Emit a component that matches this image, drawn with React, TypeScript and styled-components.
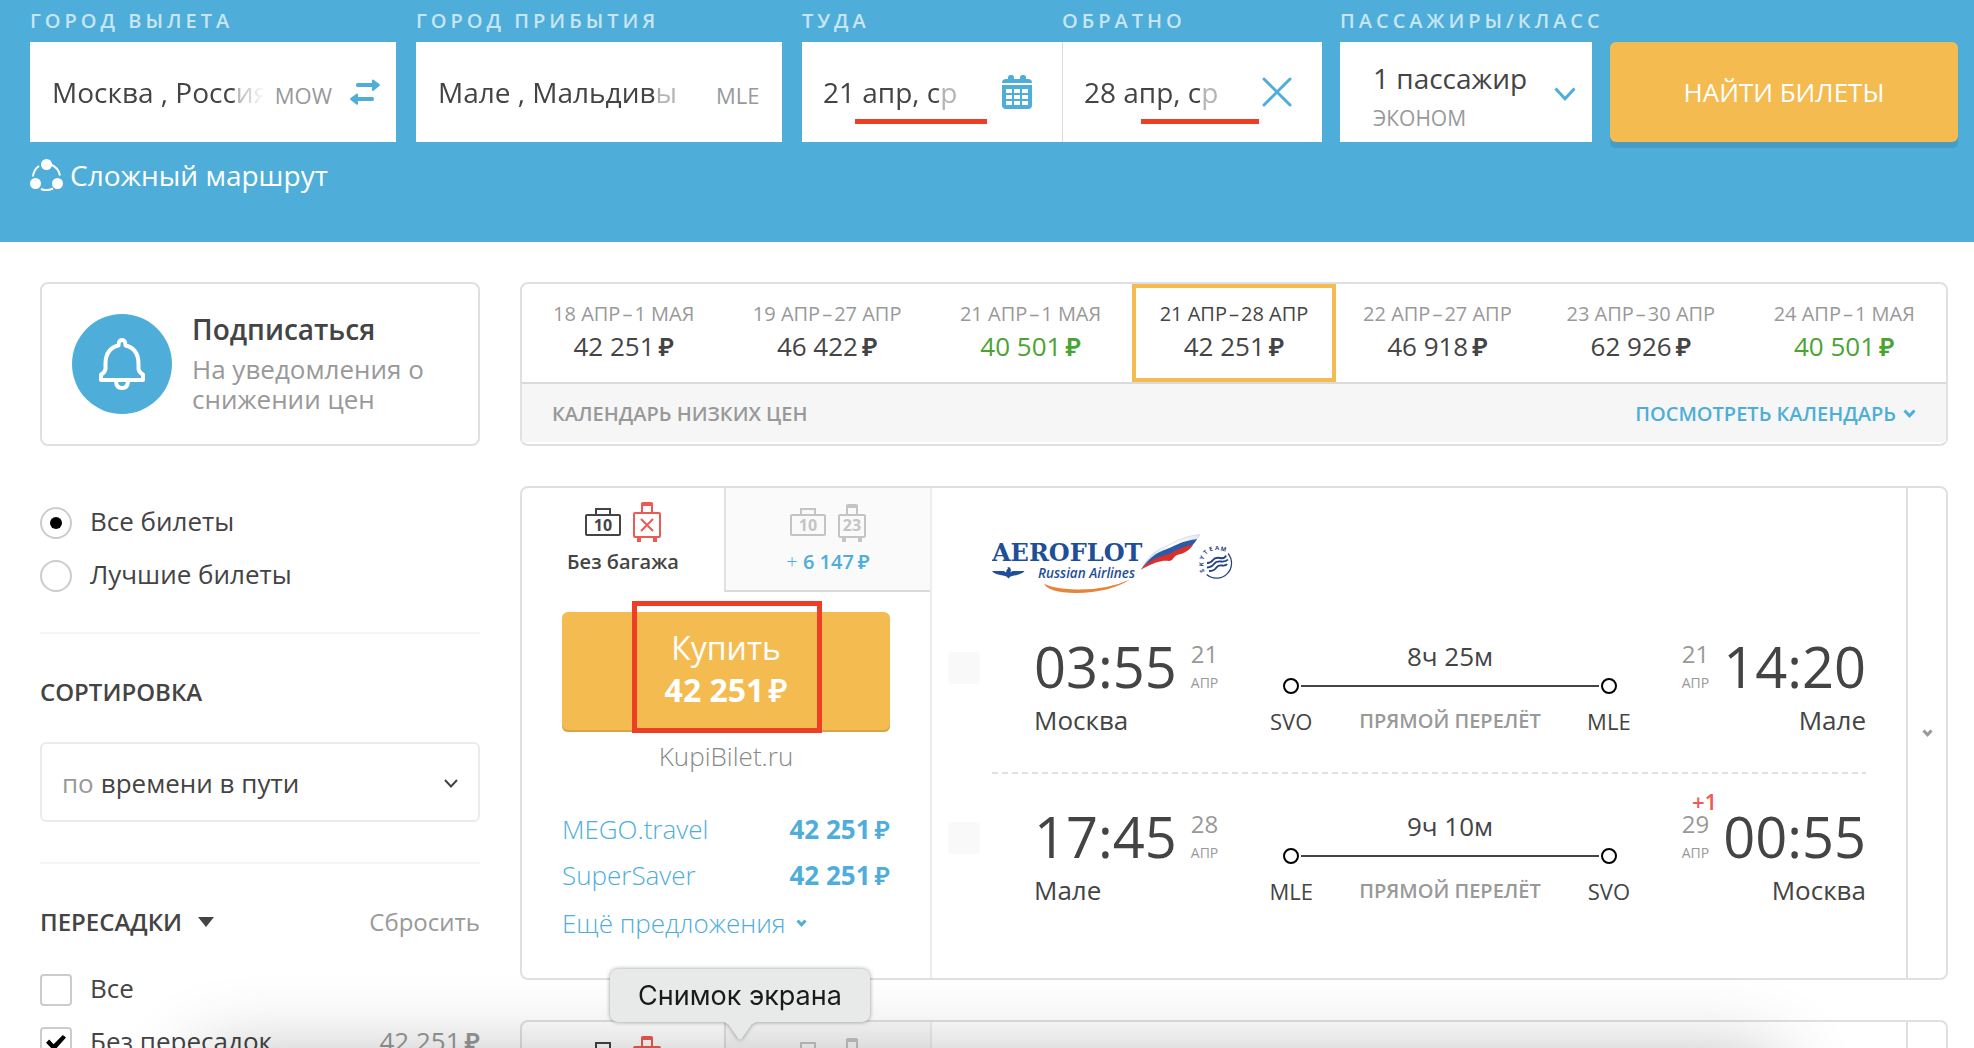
import React from 'react';
import styled, { createGlobalStyle, css } from 'styled-components';

const c = {
  blue: '#4eaed9',
  orange: '#f4bb50',
  text: '#444444',
  muted: '#999999',
  line: '#e0e0e0',
  soft: '#ededed',
  faint: '#f5f5f5',
  green: '#4aa332',
  red: '#ee5a52',
  mark: '#ee3f26',
};

const Global = createGlobalStyle`
  *, *::before, *::after { box-sizing: border-box; }
  body { margin: 0; background: #fff; }
  body, button, input, select {
    font-family: "Open Sans", "Noto Sans", sans-serif;
    color: ${c.text};
  }
  button { margin: 0; padding: 0; border: 0; background: none; cursor: pointer; }
  a { text-decoration: none; }
  h2, h3, p { margin: 0; }
`;

const Page = styled.div`
  position: relative;
  height: 100vh;
  overflow: hidden;
`;

/* ---------- search header ---------- */

const Header = styled.header`
  background: ${c.blue};
  padding: 7px 16px 49px 30px;
`;

const SearchForm = styled.form`
  display: grid;
  grid-template-columns: 1292fr 252fr 348fr;
  gap: 18px;
  align-items: end;
`;

const RouteFields = styled.div`
  display: grid;
  grid-template-columns: 366fr 366fr 520fr;
  gap: 20px;
`;

const DateFields = styled.div`
  display: grid;
  grid-template-columns: 1fr 1fr;
`;

const Field = styled.div`
  display: flex;
  flex-direction: column;
  gap: 7px;
  min-width: 0;
`;

const FieldLabel = styled.label`
  font-size: 20px;
  line-height: 28px;
  font-weight: 600;
  letter-spacing: 4px;
  text-transform: uppercase;
  white-space: nowrap;
  color: rgba(255, 255, 255, 0.7);
`;

const FieldBox = styled.div<{ $date?: boolean; $divided?: boolean }>`
  position: relative;
  display: flex;
  align-items: center;
  height: 100px;
  padding: ${(p) => (p.$date ? '0 28px 0 21px' : '0 14px 0 22px')};
  background: #fff;
  ${(p) => p.$divided && css`border-left: 1px solid #dcdcdc;`}
`;

const FieldInput = styled.input<{ $width?: number; $fade: number; $out?: boolean }>`
  ${(p) => (p.$width ? css`width: ${p.$width}px;` : css`flex: 1;`)}
  min-width: 0;
  height: 40px;
  padding: 0;
  border: 0;
  outline: 0;
  background: none;
  font-size: 28px;
  mask-image: linear-gradient(
    to right,
    #000 calc(100% - ${(p) => p.$fade}px),
    rgba(0, 0, 0, 0.4) calc(100% - ${(p) => p.$fade}px),
    rgba(0, 0, 0, ${(p) => (p.$out ? 0 : 0.4)})
  );
`;

const CityCode = styled.span<{ $alone?: boolean }>`
  margin: ${(p) => (p.$alone ? '6px 0 0 38px' : '6px 16px 0 10px')};
  font-size: 22px;
  line-height: 30px;
  color: ${c.muted};
`;

const IconButton = styled.button`
  display: flex;
  align-items: center;
  justify-content: center;
  width: 34px;
  height: 36px;
  margin-left: auto;
`;

const Underline = styled.span<{ $left: number; $width: number }>`
  position: absolute;
  left: ${(p) => p.$left}px;
  top: 77px;
  width: ${(p) => p.$width}px;
  height: 5px;
  background: ${c.mark};
`;

const PassengerButton = styled.button`
  display: flex;
  align-items: center;
  justify-content: space-between;
  height: 100px;
  padding: 4px 16px 0 33px;
  background: #fff;
  text-align: left;
`;

const PassengerText = styled.span`
  display: flex;
  flex-direction: column;
  gap: 6px;
  padding-top: 8px;
`;

const PassengerCount = styled.span`
  font-size: 28px;
  line-height: 34px;
  white-space: nowrap;
`;

const PassengerClass = styled.span`
  font-size: 21px;
  line-height: 34px;
  text-transform: uppercase;
  color: ${c.muted};
`;

const SubmitButton = styled.button`
  height: 100px;
  border-radius: 6px;
  background: ${c.orange};
  box-shadow: 0 6px 0 rgba(0, 0, 0, 0.1);
  color: #fff;
  font-size: 26px;
  white-space: nowrap;
`;

const MultiRoute = styled.a`
  display: flex;
  align-items: center;
  gap: 7px;
  width: fit-content;
  margin-top: 15px;
  font-size: 28px;
  line-height: 36px;
  color: #fff;
`;

/* ---------- page body ---------- */

const Body = styled.div`
  display: flex;
  gap: 40px;
  padding: 40px 26px 0 40px;
`;

const Sidebar = styled.aside`
  flex: none;
  width: 440px;
`;

const Main = styled.main`
  flex: 1;
  min-width: 0;
  display: flex;
  flex-direction: column;
  gap: 40px;
`;

const Subscribe = styled.button`
  display: flex;
  align-items: center;
  gap: 20px;
  width: 100%;
  height: 164px;
  padding: 0 30px;
  border: 2px solid ${c.line};
  border-radius: 8px;
  text-align: left;
`;

const BellCircle = styled.span`
  flex: none;
  display: flex;
  align-items: center;
  justify-content: center;
  width: 100px;
  height: 100px;
  border-radius: 50%;
  background: ${c.blue};
`;

const SubscribeText = styled.span`
  display: flex;
  flex-direction: column;
  gap: 10px;
  font-size: 26px;
  line-height: 30px;
  color: ${c.muted};
`;

const SubscribeTitle = styled.strong`
  font-size: 28px;
  font-weight: 600;
  color: ${c.text};
`;

const ChoiceList = styled.div<{ $top: number }>`
  display: flex;
  flex-direction: column;
  gap: 21px;
  padding-top: ${(p) => p.$top}px;
`;

const Choice = styled.label`
  display: flex;
  align-items: flex-start;
  gap: 18px;
  height: 32px;
  font-size: 26px;
  line-height: 28px;
`;

const ChoicePrice = styled.span`
  margin-left: auto;
  color: ${c.muted};
`;

const Radio = styled.input`
  appearance: none;
  flex: none;
  display: grid;
  place-items: center;
  width: 32px;
  height: 32px;
  margin: 0;
  border: 2px solid #cccccc;
  border-radius: 50%;
  background: #fff;
  &:checked::before {
    content: '';
    width: 12px;
    height: 12px;
    border-radius: 50%;
    background: #000;
  }
`;

const Checkbox = styled.input`
  appearance: none;
  flex: none;
  display: grid;
  place-items: center;
  width: 32px;
  height: 32px;
  margin: 0;
  border: 2px solid #cccccc;
  border-radius: 4px;
  background: #fff;
  &:checked::before {
    content: '';
    width: 20px;
    height: 16px;
    background: #000;
    clip-path: polygon(0 48%, 16% 28%, 38% 58%, 84% 0, 100% 16%, 40% 100%);
  }
`;

const Section = styled.section`
  margin-top: 40px;
  padding-top: 42px;
  border-top: 2px solid ${c.faint};
`;

const SectionHead = styled.div`
  display: flex;
  align-items: center;
  justify-content: space-between;
`;

const SectionTitle = styled.h2`
  display: flex;
  align-items: center;
  gap: 16px;
  font-size: 24px;
  line-height: 32px;
  font-weight: 600;
`;

const ResetButton = styled.button`
  font-size: 24px;
  line-height: 32px;
  color: ${c.muted};
`;

const SelectBox = styled.label`
  display: flex;
  align-items: center;
  gap: 7px;
  height: 80px;
  margin-top: 34px;
  padding: 2px 20px 0;
  border: 2px solid #ebebeb;
  border-radius: 6px;
  font-size: 26px;
  color: ${c.muted};
`;

const SortSelect = styled.select`
  appearance: none;
  flex: 1;
  min-width: 0;
  height: 40px;
  padding: 0;
  border: 0;
  outline: 0;
  background: none;
  font-size: 26px;
`;

/* ---------- price calendar ---------- */

const Calendar = styled.section`
  border: 2px solid ${c.line};
  border-radius: 8px;
`;

const CalendarRow = styled.div`
  display: flex;
  border-bottom: 2px solid #dadada;
`;

const Day = styled.button<{ $active?: boolean; $low?: boolean }>`
  flex: 1;
  min-width: 0;
  display: flex;
  flex-direction: column;
  align-items: center;
  gap: 2px;
  height: 98px;
  padding-top: 16px;
  font-size: 26px;
  line-height: 32px;
  color: ${(p) => (p.$low ? c.green : c.text)};
  & + & { box-shadow: inset 2px 0 0 ${c.line}; }
  ${(p) =>
    p.$active &&
    css`
      &&& { box-shadow: inset 0 0 0 4px ${c.orange}; }
      & + & { box-shadow: none; }
    `}
`;

const DayRange = styled.span<{ $active?: boolean }>`
  font-size: 20px;
  line-height: 28px;
  white-space: nowrap;
  color: ${(p) => (p.$active ? c.text : c.muted)};
`;

const Dash = styled.span`
  margin: 0 2px;
`;

const CalendarFoot = styled.div`
  display: flex;
  align-items: center;
  justify-content: space-between;
  height: 58px;
  margin-bottom: 2px;
  padding: 0 30px;
  background: #f6f6f6;
  font-size: 20px;
  font-weight: 600;
  color: ${c.muted};
`;

const CalendarLink = styled.a`
  display: flex;
  align-items: center;
  gap: 7px;
  color: ${c.blue};
`;

/* ---------- tickets ---------- */

const TicketCard = styled.article`
  display: flex;
  border: 2px solid ${c.line};
  border-radius: 8px;
`;

const Offers = styled.div`
  flex: none;
  width: 410px;
  border-right: 2px solid ${c.soft};
`;

const Tabs = styled.div`
  display: grid;
  grid-template-columns: 202px 1fr;
`;

const Tab = styled.button<{ $idle?: boolean }>`
  display: flex;
  flex-direction: column;
  align-items: center;
  gap: 6px;
  height: 104px;
  padding-top: 14px;
  font-size: 20px;
  line-height: 28px;
  font-weight: 600;
  ${(p) =>
    p.$idle &&
    css`
      border-left: 2px solid ${c.line};
      border-bottom: 2px solid #dadada;
      background: #fafafa;
      color: ${c.blue};
    `}
`;

const Plus = styled.span`
  font-weight: 300;
`;

const OfferBody = styled.div`
  display: flex;
  flex-direction: column;
  padding: 20px 40px;
`;

const BuyWrap = styled.div`
  position: relative;
  display: grid;
`;

const BuyButton = styled.button`
  height: 120px;
  padding-bottom: 6px;
  border-radius: 6px;
  background: ${c.orange};
  box-shadow: inset 0 -2px 0 #d6a548;
  color: #fff;
  font-size: 32px;
  line-height: 42px;
`;

const BuyPrice = styled.strong`
  display: block;
  font-weight: 700;
`;

const BuyMark = styled.span`
  position: absolute;
  top: -11px;
  bottom: -1px;
  left: 70px;
  width: 190px;
  border: 5px solid ${c.mark};
  pointer-events: none;
`;

const Agency = styled.p`
  margin-top: 6px;
  font-size: 26px;
  line-height: 36px;
  font-weight: 300;
  text-align: center;
  color: #888888;
`;

const OfferList = styled.div`
  display: flex;
  flex-direction: column;
  margin-top: 32px;
`;

const OfferLink = styled.a`
  display: flex;
  justify-content: space-between;
  font-size: 26px;
  line-height: 46px;
  font-weight: 300;
  color: ${c.blue};
`;

const OfferPrice = styled.strong`
  font-weight: 700;
`;

const MoreOffers = styled.button`
  display: flex;
  align-items: center;
  gap: 10px;
  font-size: 26px;
  line-height: 50px;
  font-weight: 300;
  color: ${c.blue};
`;

const Flight = styled.div`
  flex: 1;
  min-width: 0;
  padding: 46px 40px 72px 16px;
`;

const LogoRow = styled.div`
  height: 104px;
  padding-left: 44px;
`;

const Segment = styled.div`
  display: flex;
  align-items: flex-start;
  gap: 54px;
`;

const PinButton = styled.button`
  flex: none;
  width: 32px;
  height: 32px;
  margin-top: 14px;
  border-radius: 4px;
  background: #f9f9f9;
`;

const SegmentBody = styled.div`
  flex: 1;
  display: grid;
  grid-template-columns: 1fr 43% 1fr;
`;

const Dashes = styled.div`
  height: 2px;
  margin: 36px 0 34px 44px;
  background: repeating-linear-gradient(to right, ${c.line} 0 6px, transparent 6px 10px);
`;

const Stop = styled.div<{ $end?: boolean }>`
  display: flex;
  flex-direction: column;
  gap: 10px;
  align-items: ${(p) => (p.$end ? 'flex-end' : 'flex-start')};
`;

const StopTop = styled.div<{ $end?: boolean }>`
  display: flex;
  flex-direction: ${(p) => (p.$end ? 'row-reverse' : 'row')};
  gap: 14px;
  height: 56px;
`;

const Time = styled.span`
  font-size: 56px;
  line-height: 56px;
`;

const StopDate = styled.span`
  position: relative;
  display: flex;
  flex-direction: column;
  gap: 4px;
  font-size: 24px;
  line-height: 32px;
  color: ${c.muted};
`;

const Month = styled.span`
  font-size: 14px;
  line-height: 18px;
`;

const NextDay = styled.span`
  position: absolute;
  top: -15px;
  right: -8px;
  font-size: 22px;
  line-height: 16px;
  font-weight: 600;
  color: ${c.red};
`;

const City = styled.span`
  font-size: 26px;
  line-height: 32px;
`;

const Route = styled.div`
  display: flex;
  flex-direction: column;
  padding-top: 2px;
`;

const Duration = styled.span`
  font-size: 26px;
  line-height: 32px;
  text-align: center;
`;

const Track = styled.div`
  display: flex;
  align-items: center;
  gap: 2px;
  margin: 6px 12px 12px;
`;

const Dot = styled.span`
  width: 16px;
  height: 16px;
  border: 2px solid #000;
  border-radius: 50%;
`;

const TrackLine = styled.span`
  flex: 1;
  height: 2px;
  background: ${c.text};
`;

const Airports = styled.div`
  display: flex;
  justify-content: space-between;
  line-height: 30px;
`;

const Airport = styled.span`
  display: flex;
  justify-content: center;
  width: 40px;
  font-size: 22px;
`;

const Direct = styled.span`
  font-size: 20px;
  font-weight: 600;
  color: ${c.muted};
`;

const ExpandButton = styled.button`
  flex: none;
  display: flex;
  align-items: center;
  justify-content: center;
  width: 40px;
  border-left: 2px solid ${c.line};
`;

/* ---------- desktop overlays ---------- */

const DockShade = styled.div`
  position: absolute;
  top: calc(100% + 12px);
  left: 200px;
  right: 200px;
  height: 200px;
  box-shadow: 0 0 80px rgba(0, 0, 0, 0.3);
  pointer-events: none;
`;

const Tooltip = styled.div`
  position: absolute;
  bottom: 26px;
  left: 610px;
  width: 260px;
  height: 53px;
  border-radius: 8px;
  background: #e8eaea;
  filter: drop-shadow(0 0 2px rgba(0, 0, 0, 0.4));
  font-family: Inter, "Noto Sans", sans-serif;
  font-size: 27px;
  line-height: 53px;
  text-align: center;
  color: #1a1a1a;
  &::after {
    content: '';
    position: absolute;
    top: 100%;
    left: 114px;
    width: 32px;
    height: 18px;
    background: #e8eaea;
    clip-path: polygon(0 0, 100% 0, 86% 14%, 54% 96%, 46% 96%, 14% 14%);
  }
`;

const RubSign = styled.span`
  margin-left: 4px;
  font-weight: 600;
`;

const Rub = () => <RubSign>₽</RubSign>;

/* ---------- icons ---------- */

const Chevron = ({ w, h, color, stroke }: { w: number; h: number; color: string; stroke: number }) => (
  <svg width={w} height={h} viewBox={`0 0 ${w} ${h}`} fill="none" aria-hidden="true">
    <path
      d={`M${stroke / 2} ${stroke / 2}L${w / 2} ${h - stroke * 0.75}L${w - stroke / 2} ${stroke / 2}`}
      stroke={color}
      strokeWidth={stroke}
    />
  </svg>
);

const SwapIcon = () => (
  <svg width="30" height="26" viewBox="0 0 30 26" fill={c.blue} aria-hidden="true">
    <path d="M7.5 4H22V1.5Q22 0 23.5 0.7L29.4 5Q30.300 6 29.4 7L23.5 11.7Q22 12.5 22 11V8H7.5Q6 8 6 6T7.5 4Z" />
    <path d="M22.5 18H8V15.5Q8 14 6.5 14.7L0.6 19Q-0.3 20 0.6 21L6.5 25.5Q8 26.3 8 25V22H22.5Q24 22 24 20T22.5 18Z" />
  </svg>
);

const CalendarIcon = () => (
  <svg width="30" height="34" viewBox="0 0 30 34" aria-hidden="true">
    <rect x="6" y="0" width="6" height="7" rx="2.5" fill={c.blue} />
    <rect x="18" y="0" width="6" height="7" rx="2.5" fill={c.blue} />
    <path d="M4 4H26Q30 4 30 8H0Q0 4 4 4Z" fill={c.blue} />
    <path d="M0 10H30V30Q30 34 26 34H4Q0 34 0 30Z" fill={c.blue} />
    {[14, 20, 26].map((y) =>
      [4, 12, 20].map((x) => <rect key={`${x}-${y}`} x={x} y={y} width="6" height="4" fill="#fff" />),
    )}
  </svg>
);

const CloseIcon = () => (
  <svg width="30" height="30" viewBox="0 0 30 30" aria-hidden="true">
    <path d="M2 2L28 28M28 2L2 28" stroke={c.blue} strokeWidth="3" strokeLinecap="round" />
  </svg>
);

const MultiIcon = () => (
  <svg width="33" height="32" viewBox="0 0 33 32" fill="none" aria-hidden="true">
    <circle cx="16.5" cy="5.5" r="5.5" fill="#fff" />
    <circle cx="5.5" cy="24.5" r="5.5" fill="#fff" />
    <circle cx="27.5" cy="24.5" r="5.5" fill="#fff" />
    <path d="M9 7Q3.5 11 3 17.5M20 5Q29 9 30 16.5M11 30Q16.5 32.5 23 29.5" stroke="#fff" strokeWidth="2" />
  </svg>
);

const BellIcon = () => (
  <svg width="46" height="52" viewBox="0 0 46 52" fill="none" aria-hidden="true">
    <path
      d="M19.5 7.5Q19.5 2 23 2T26.5 7.5Q39.5 10.5 39.5 26V31Q40.5 35 44 36.5V42H2V36.5Q5.5 35 6.5 31V26Q6.5 10.5 19.5 7.5Z"
      stroke="#fff"
      strokeWidth="4"
      strokeLinejoin="round"
    />
    <path d="M17 43Q17 50 23 50T29 43" stroke="#fff" strokeWidth="4" />
  </svg>
);

const BagIcons = ({ idle }: { idle?: boolean }) => {
  const hand = idle ? '#c4c4c4' : c.text;
  const hold = idle ? '#c4c4c4' : c.red;
  return (
    <svg width="76" height="40" viewBox="0 0 76 40" fill="none" aria-hidden="true">
      <path d="M11 12V7H25V12" stroke={hand} strokeWidth="2" />
      <rect x="1" y="13" width="34" height="20" rx="1" stroke={hand} strokeWidth="2" />
      <text x="18" y="29" textAnchor="middle" fontSize="16" fontWeight="700" fill={hand}>
        10
      </text>
      <path d={idle ? 'M57 12V4H67V12' : 'M57 11V2H67V11'} stroke={hold} strokeWidth="2" />
      <rect x="56" y={idle ? 2 : 0} width="12" height="4" rx="2" fill={hold} />
      <rect x="49" y={idle ? 13 : 11} width="26" height={idle ? 22 : 24} rx="1" stroke={hold} strokeWidth="2" />
      <path d="M54 36V40M70 36V40" stroke={hold} strokeWidth="4" />
      {idle ? (
        <text x="62" y="29" textAnchor="middle" fontSize="16" fontWeight="700" fill={hold}>
          23
        </text>
      ) : (
        <path d="M56 17L68 29M68 17L56 29" stroke={hold} strokeWidth="2" />
      )}
    </svg>
  );
};

const AeroflotLogo = () => (
  <svg width="244" height="60" viewBox="0 0 244 60" role="img" aria-label="Aeroflot Russian Airlines">
    <defs>
      <linearGradient id="tail" x1="0" x2="1" y1="0" y2="0">
        <stop offset="0" stopColor="#c9d3e4" />
        <stop offset="0.5" stopColor="#ffffff" />
        <stop offset="1" stopColor="#e3e8f0" />
      </linearGradient>
    </defs>
    <text x="0" y="27" fontFamily="DejaVu Serif" fontWeight="700" fontSize="24" fill="#1f4f96">
      AEROFLOT
    </text>
    <path d="M149 35.5C156 24 161 18 170 14C181 10 187 3 208 0.5C203 8 200 12 192 14C182 17 176 20 168 22C160 25 155 29 149 35.5Z" fill="url(#tail)" stroke="#c3cad6" strokeWidth="0.6" />
    <path d="M149 35.5C156 26 162 20 171 16.5C182 13 188 7 205 5C201 12 197 15 190 17C179 20 175 24 166 26C158 28 154 30 149 35.5Z" fill="#2c5ba6" />
    <path d="M149 35.5C157 27 163 24 172 21.500C184 18.500 188 12 201 11C196 18 190 20 185 21C181 23 181 27 177 27C172 26 165 26.500 149 35.500Z" fill="#db2f2c" />
    <path d="M0 37H12L14 38.5Q14.5 35 16 34.5L15.5 33L18 33.5L19 36L18.5 38.5L20.5 37H32.5Q31 40 22 41.5L18.5 42.5L16.5 44.5L14.5 42.5L11 41.5Q2 40 0 37Z" fill="#1f4f96" />
    <text x="46" y="44" fontFamily="Open Sans" fontStyle="italic" fontWeight="600" fontSize="13.5" fill="#1f4f96">
      Russian Airlines
    </text>
    <path d="M52 49.5Q60 54.5 84 55.5Q115 56 138 45.5Q118 58.5 84 59Q56 58.5 52 49.5Z" fill="#e8833a" />
    <path d="M236 19.5A15 15 0 0 1 214.7 40.5" fill="none" stroke="#24427f" strokeWidth="1.2" />
    <path
      d="M215 29Q219 29 221 26T228 24T234 21.5M215 33.5Q220 33 222 30T229 27.500T236 25.500M217 37Q222 37 224 34T230 31.500T235 30"
      fill="none"
      stroke="#24427f"
      strokeWidth="1.8"
    />
    <g fontFamily="Open Sans" fontWeight="700" fontSize="6" fill="#24427f" textAnchor="middle">
      <text transform="translate(212 36.500) rotate(-105)">S</text>
      <text transform="translate(211.500 30.500) rotate(-85)">K</text>
      <text transform="translate(212 24.500) rotate(-65)">Y</text>
      <text transform="translate(215 19.800) rotate(-45)">T</text>
      <text transform="translate(219.500 17) rotate(-20)">E</text>
      <text transform="translate(225 16)">A</text>
      <text transform="translate(231 17) rotate(12)">M</text>
    </g>
  </svg>
);

/* ---------- data ---------- */

const days = [
  { from: '18 АПР', to: '1 МАЯ', price: '42 251' },
  { from: '19 АПР', to: '27 АПР', price: '46 422' },
  { from: '21 АПР', to: '1 МАЯ', price: '40 501', low: true },
  { from: '21 АПР', to: '28 АПР', price: '42 251', active: true },
  { from: '22 АПР', to: '27 АПР', price: '46 918' },
  { from: '23 АПР', to: '30 АПР', price: '62 926' },
  { from: '24 АПР', to: '1 МАЯ', price: '40 501', low: true },
];

const offers = [
  { name: 'MEGO.travel', price: '42 251' },
  { name: 'SuperSaver', price: '42 251' },
];

type Leg = {
  time: string;
  day: string;
  city: string;
  code: string;
};

const legs: { from: Leg; to: Leg; duration: string; nextDay?: boolean }[] = [
  {
    from: { time: '03:55', day: '21', city: 'Москва', code: 'SVO' },
    to: { time: '14:20', day: '21', city: 'Мале', code: 'MLE' },
    duration: '8ч 25м',
  },
  {
    from: { time: '17:45', day: '28', city: 'Мале', code: 'MLE' },
    to: { time: '00:55', day: '29', city: 'Москва', code: 'SVO' },
    duration: '9ч 10м',
    nextDay: true,
  },
];

/* ---------- composed parts ---------- */

const StopInfo = ({ leg, end, nextDay }: { leg: Leg; end?: boolean; nextDay?: boolean }) => (
  <Stop $end={end}>
    <StopTop $end={end}>
      <Time>{leg.time}</Time>
      <StopDate>
        {nextDay && <NextDay>+1</NextDay>}
        {leg.day}
        <Month>АПР</Month>
      </StopDate>
    </StopTop>
    <City>{leg.city}</City>
  </Stop>
);

const BaggageTabs = ({ labels }: { labels?: boolean }) => (
  <Tabs>
    <Tab type="button" aria-label="Без багажа">
      <BagIcons />
      {labels && <span>Без багажа</span>}
    </Tab>
    <Tab type="button" $idle aria-label="С багажом">
      <BagIcons idle />
      {labels && (
        <span>
          <Plus>+</Plus> 6 147
          <Rub />
        </span>
      )}
    </Tab>
  </Tabs>
);

const SearchHeader = () => (
  <Header>
    <SearchForm onSubmit={(e) => e.preventDefault()}>
      <RouteFields>
        <Field>
          <FieldLabel htmlFor="from">Город вылета</FieldLabel>
          <FieldBox>
            <FieldInput id="from" defaultValue="Москва , Россия" $fade={28} $out />
            <CityCode>MOW</CityCode>
            <IconButton type="button" aria-label="Поменять города">
              <SwapIcon />
            </IconButton>
          </FieldBox>
        </Field>
        <Field>
          <FieldLabel htmlFor="to">Город прибытия</FieldLabel>
          <FieldBox>
            <FieldInput id="to" defaultValue="Мале , Мальдивы" $width={240} $fade={22} />
            <CityCode $alone>MLE</CityCode>
          </FieldBox>
        </Field>
        <DateFields>
          <Field>
            <FieldLabel htmlFor="out">Туда</FieldLabel>
            <FieldBox $date>
              <FieldInput id="out" defaultValue="21 апр, ср" $width={140} $fade={22} />
              <IconButton type="button" aria-label="Календарь">
                <CalendarIcon />
              </IconButton>
              <Underline $left={53} $width={132} />
            </FieldBox>
          </Field>
          <Field>
            <FieldLabel htmlFor="back">Обратно</FieldLabel>
            <FieldBox $date $divided>
              <FieldInput id="back" defaultValue="28 апр, ср" $width={140} $fade={22} />
              <IconButton type="button" aria-label="Очистить дату">
                <CloseIcon />
              </IconButton>
              <Underline $left={78} $width={118} />
            </FieldBox>
          </Field>
        </DateFields>
      </RouteFields>
      <Field>
        <FieldLabel htmlFor="passengers">Пассажиры/класс</FieldLabel>
        <PassengerButton id="passengers" type="button">
          <PassengerText>
            <PassengerCount>1 пассажир</PassengerCount>
            <PassengerClass>эконом</PassengerClass>
          </PassengerText>
          <Chevron w={22} h={14} color={c.blue} stroke={3} />
        </PassengerButton>
      </Field>
      <SubmitButton type="submit">НАЙТИ БИЛЕТЫ</SubmitButton>
    </SearchForm>
    <MultiRoute href="#multi">
      <MultiIcon />
      Сложный маршрут
    </MultiRoute>
  </Header>
);

export default function App() {
  return (
    <Page>
      <Global />
      <SearchHeader />
      <Body>
        <Sidebar>
          <Subscribe type="button">
            <BellCircle>
              <BellIcon />
            </BellCircle>
            <SubscribeText>
              <SubscribeTitle>Подписаться</SubscribeTitle>
              <span>На уведомления о снижении цен</span>
            </SubscribeText>
          </Subscribe>

          <ChoiceList $top={61}>
            <Choice>
              <Radio type="radio" name="view" defaultChecked />
              Все билеты
            </Choice>
            <Choice>
              <Radio type="radio" name="view" />
              Лучшие билеты
            </Choice>
          </ChoiceList>

          <Section>
            <SectionTitle>СОРТИРОВКА</SectionTitle>
            <SelectBox>
              по
              <SortSelect defaultValue="time">
                <option value="time">времени в пути</option>
              </SortSelect>
              <Chevron w={14} h={9} color={c.text} stroke={2} />
            </SelectBox>
          </Section>

          <Section>
            <SectionHead>
              <SectionTitle>
                ПЕРЕСАДКИ
                <svg width="16" height="10" viewBox="0 0 16 10" aria-hidden="true">
                  <path d="M0 0H16L8 10Z" fill={c.text} />
                </svg>
              </SectionTitle>
              <ResetButton type="button">Сбросить</ResetButton>
            </SectionHead>
            <ChoiceList $top={36}>
              <Choice>
                <Checkbox type="checkbox" />
                Все
              </Choice>
              <Choice>
                <Checkbox type="checkbox" defaultChecked />
                Без пересадок
                <ChoicePrice>
                  42 251
                  <Rub />
                </ChoicePrice>
              </Choice>
            </ChoiceList>
          </Section>
        </Sidebar>

        <Main>
          <Calendar>
            <CalendarRow>
              {days.map((d) => (
                <Day key={d.from + d.to} type="button" $active={d.active} $low={d.low}>
                  <DayRange $active={d.active}>
                    {d.from}
                    <Dash>–</Dash>
                    {d.to}
                  </DayRange>
                  <span>
                    {d.price}
                    <Rub />
                  </span>
                </Day>
              ))}
            </CalendarRow>
            <CalendarFoot>
              <span>КАЛЕНДАРЬ НИЗКИХ ЦЕН</span>
              <CalendarLink href="#calendar">
                ПОСМОТРЕТЬ КАЛЕНДАРЬ
                <Chevron w={13} h={9} color={c.blue} stroke={3} />
              </CalendarLink>
            </CalendarFoot>
          </Calendar>

          <TicketCard>
            <Offers>
              <BaggageTabs labels />
              <OfferBody>
                <BuyWrap>
                  <BuyButton type="button">
                    Купить
                    <BuyPrice>
                      42 251
                      <Rub />
                    </BuyPrice>
                  </BuyButton>
                  <BuyMark />
                </BuyWrap>
                <Agency>KupiBilet.ru</Agency>
                <OfferList>
                  {offers.map((o) => (
                    <OfferLink key={o.name} href="#offer">
                      {o.name}
                      <OfferPrice>
                        {o.price}
                        <Rub />
                      </OfferPrice>
                    </OfferLink>
                  ))}
                  <MoreOffers type="button">
                    Ещё предложения
                    <Chevron w={11} h={8} color={c.blue} stroke={3} />
                  </MoreOffers>
                </OfferList>
              </OfferBody>
            </Offers>
            <Flight>
              <LogoRow>
                <AeroflotLogo />
              </LogoRow>
              {legs.map((l, i) => (
                <React.Fragment key={l.duration}>
                  {i > 0 && <Dashes />}
                  <Segment>
                    <PinButton type="button" aria-label="Закрепить рейс" />
                    <SegmentBody>
                      <StopInfo leg={l.from} />
                      <Route>
                        <Duration>{l.duration}</Duration>
                        <Track>
                          <Dot />
                          <TrackLine />
                          <Dot />
                        </Track>
                        <Airports>
                          <Airport>{l.from.code}</Airport>
                          <Direct>ПРЯМОЙ ПЕРЕЛЁТ</Direct>
                          <Airport>{l.to.code}</Airport>
                        </Airports>
                      </Route>
                      <StopInfo leg={l.to} end nextDay={l.nextDay} />
                    </SegmentBody>
                  </Segment>
                </React.Fragment>
              ))}
            </Flight>
            <ExpandButton type="button" aria-label="Подробнее">
              <Chevron w={11} h={8} color={c.muted} stroke={3} />
            </ExpandButton>
          </TicketCard>

          <TicketCard>
            <Offers>
              <BaggageTabs />
            </Offers>
            <Flight />
            <ExpandButton type="button" aria-label="Подробнее" />
          </TicketCard>
        </Main>
      </Body>
      <DockShade />
      <Tooltip role="tooltip">Снимок экрана</Tooltip>
    </Page>
  );
}
